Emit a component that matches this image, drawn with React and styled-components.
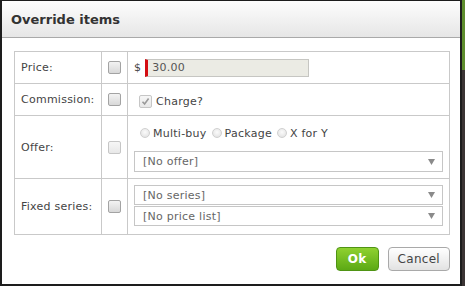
import React from "react";
import styled, { createGlobalStyle } from "styled-components";

const GlobalStyle = createGlobalStyle`
  html, body {
    margin: 0;
    padding: 0;
    background: linear-gradient(#5d8c2c 0, #5d8c2c 70px, #3b3434 70px);
    font-family: "DejaVu Sans", Verdana, sans-serif;
  }
`;

const Dialog = styled.div`
  width: 462px;
  height: 286px;
  box-sizing: border-box;
  background: #fff;
  border: 2px solid #1d1d1d;
  border-top-width: 1px;
  display: flex;
  flex-direction: column;
`;

const Header = styled.div`
  height: 36px;
  flex: none;
  display: flex;
  align-items: center;
  padding-left: 9px;
  background: linear-gradient(#fdfdfd, #e6e6e6);
  border-bottom: 1px solid #a9a9a9;
`;

const Title = styled.h1`
  margin: 0;
  font-size: 13px;
  font-weight: bold;
  color: #333;
`;

const Body = styled.div`
  padding: 13px 10px 0 12px;
`;

const FormGrid = styled.div`
  display: grid;
  width: 436px;
  box-sizing: border-box;
  grid-template-columns: 87px 26px 1fr;
  grid-template-rows: 32px 32px 63px 56px;
  border-top: 1px solid #c9c9c9;
  border-left: 1px solid #c9c9c9;
`;

const Cell = styled.div`
  box-sizing: border-box;
  border-right: 1px solid #c9c9c9;
  border-bottom: 1px solid #c9c9c9;
  display: flex;
  align-items: center;
  min-width: 0;
`;

const LabelCell = styled(Cell)`
  padding-left: 6px;
  font-size: 11px;
  letter-spacing: 0.25px;
  color: #444;
`;

const CheckCell = styled(Cell)`
  justify-content: center;
`;

const ContentCell = styled(Cell)`
  padding: ${(p) => p.$pad || "0 6px"};
  flex-direction: ${(p) => (p.$stack ? "column" : "row")};
  align-items: ${(p) => (p.$stack ? "stretch" : "center")};
  font-size: 11px;
  letter-spacing: 0.25px;
  color: #444;
`;

const Box = styled.span`
  width: 11px;
  height: 11px;
  border: 1px solid ${(p) => (p.$disabled ? "#c6c6c6" : "#a3a3a3")};
  border-radius: 2px;
  background: ${(p) =>
    p.$disabled
      ? "linear-gradient(#f6f6f6, #e8e8e8)"
      : "linear-gradient(#f3f3f3, #d8d8d8)"};
  display: inline-flex;
  align-items: center;
  justify-content: center;
  flex: none;
`;

const Check = ({ checked, disabled }) => (
  <Box $disabled={disabled}>
    {checked && (
      <svg width="9" height="9" viewBox="0 0 9 9">
        <path d="M1.5 4.8 L3.6 7 L7.6 1.6" fill="none" stroke="#9a9a9a" strokeWidth="1.6" />
      </svg>
    )}
  </Box>
);

const Dollar = styled.span`
  margin-right: 4px;
`;

const PriceInput = styled.div`
  width: 164px;
  height: 18px;
  box-sizing: border-box;
  background: #ebebe4;
  border: 1px solid #c6c6c2;
  border-left: 3px solid #d40d12;
  padding-left: 4px;
  display: flex;
  align-items: center;
  color: #555;
`;

const ChargeLabel = styled.label`
  display: flex;
  align-items: center;
  gap: 4px;
  margin-top: 3px;
  padding-left: 5px;
`;

const RadioRow = styled.div`
  display: flex;
  align-items: center;
  height: 18px;
  padding-left: 6px;
  margin-bottom: 9px;
`;

const RadioDot = styled.span`
  width: 10px;
  height: 10px;
  box-sizing: border-box;
  border-radius: 50%;
  border: 1px solid #d0d0d0;
  background: radial-gradient(circle at 50% 40%, #fbfbfb, #dedede);
  margin-right: 3px;
  flex: none;
`;

const RadioText = styled.span`
  margin-right: 5px;
`;

const Select = styled.div`
  height: ${(p) => p.$h || 20}px;
  box-sizing: border-box;
  border: 1px solid #c6c6c6;
  background: #fff;
  display: flex;
  align-items: center;
  justify-content: space-between;
  padding: 0 7px 0 8px;
  color: #666;
  & + & {
    margin-top: 1px;
  }
`;

const Arrow = () => (
  <svg width="7" height="6" viewBox="0 0 7 6">
    <path d="M0 0 L7 0 L3.5 6 Z" fill="#8a8a8a" />
  </svg>
);

const Footer = styled.div`
  display: flex;
  justify-content: flex-end;
  gap: 9px;
  width: 436px;
  padding: 12px 0 0 12px;
`;

const Button = styled.button`
  height: 24px;
  box-sizing: border-box;
  padding: 0 ${(p) => (p.$primary ? "11px" : "9px")};
  border-radius: 4px;
  border: 1px solid ${(p) => (p.$primary ? "#4f9414" : "#a9a9a9")};
  background: ${(p) =>
    p.$primary
      ? "linear-gradient(#8fd130, #5ca915)"
      : "linear-gradient(#ffffff, #e2e2e2)"};
  color: ${(p) => (p.$primary ? "#fff" : "#444")};
  font-family: "DejaVu Sans", Verdana, sans-serif;
  font-size: 12px;
  letter-spacing: 0.3px;
  font-weight: ${(p) => (p.$primary ? "bold" : "normal")};
  min-width: ${(p) => (p.$primary ? "40px" : "61px")};
`;

export default function App() {
  return (
    <>
      <GlobalStyle />
      <Dialog>
        <Header>
          <Title>Override items</Title>
        </Header>
        <Body>
          <FormGrid>
            <LabelCell>Price:</LabelCell>
            <CheckCell>
              <Check />
            </CheckCell>
            <ContentCell>
              <Dollar>$</Dollar>
              <PriceInput>30.00</PriceInput>
            </ContentCell>

            <LabelCell>Commission:</LabelCell>
            <CheckCell>
              <Check />
            </CheckCell>
            <ContentCell>
              <ChargeLabel>
                <Check checked disabled />
                Charge?
              </ChargeLabel>
            </ContentCell>

            <LabelCell>Offer:</LabelCell>
            <CheckCell>
              <Check disabled />
            </CheckCell>
            <ContentCell $stack $pad="8px 6px 0 6px">
              <RadioRow>
                <RadioDot />
                <RadioText>Multi-buy</RadioText>
                <RadioDot />
                <RadioText>Package</RadioText>
                <RadioDot />
                <RadioText>X for Y</RadioText>
              </RadioRow>
              <Select $h={21}>
                [No offer]
                <Arrow />
              </Select>
            </ContentCell>

            <LabelCell>Fixed series:</LabelCell>
            <CheckCell>
              <Check />
            </CheckCell>
            <ContentCell $stack $pad="6px 6px 0 6px">
              <Select>
                [No series]
                <Arrow />
              </Select>
              <Select>
                [No price list]
                <Arrow />
              </Select>
            </ContentCell>
          </FormGrid>
        </Body>
        <Footer>
          <Button $primary>Ok</Button>
          <Button>Cancel</Button>
        </Footer>
      </Dialog>
    </>
  );
}
